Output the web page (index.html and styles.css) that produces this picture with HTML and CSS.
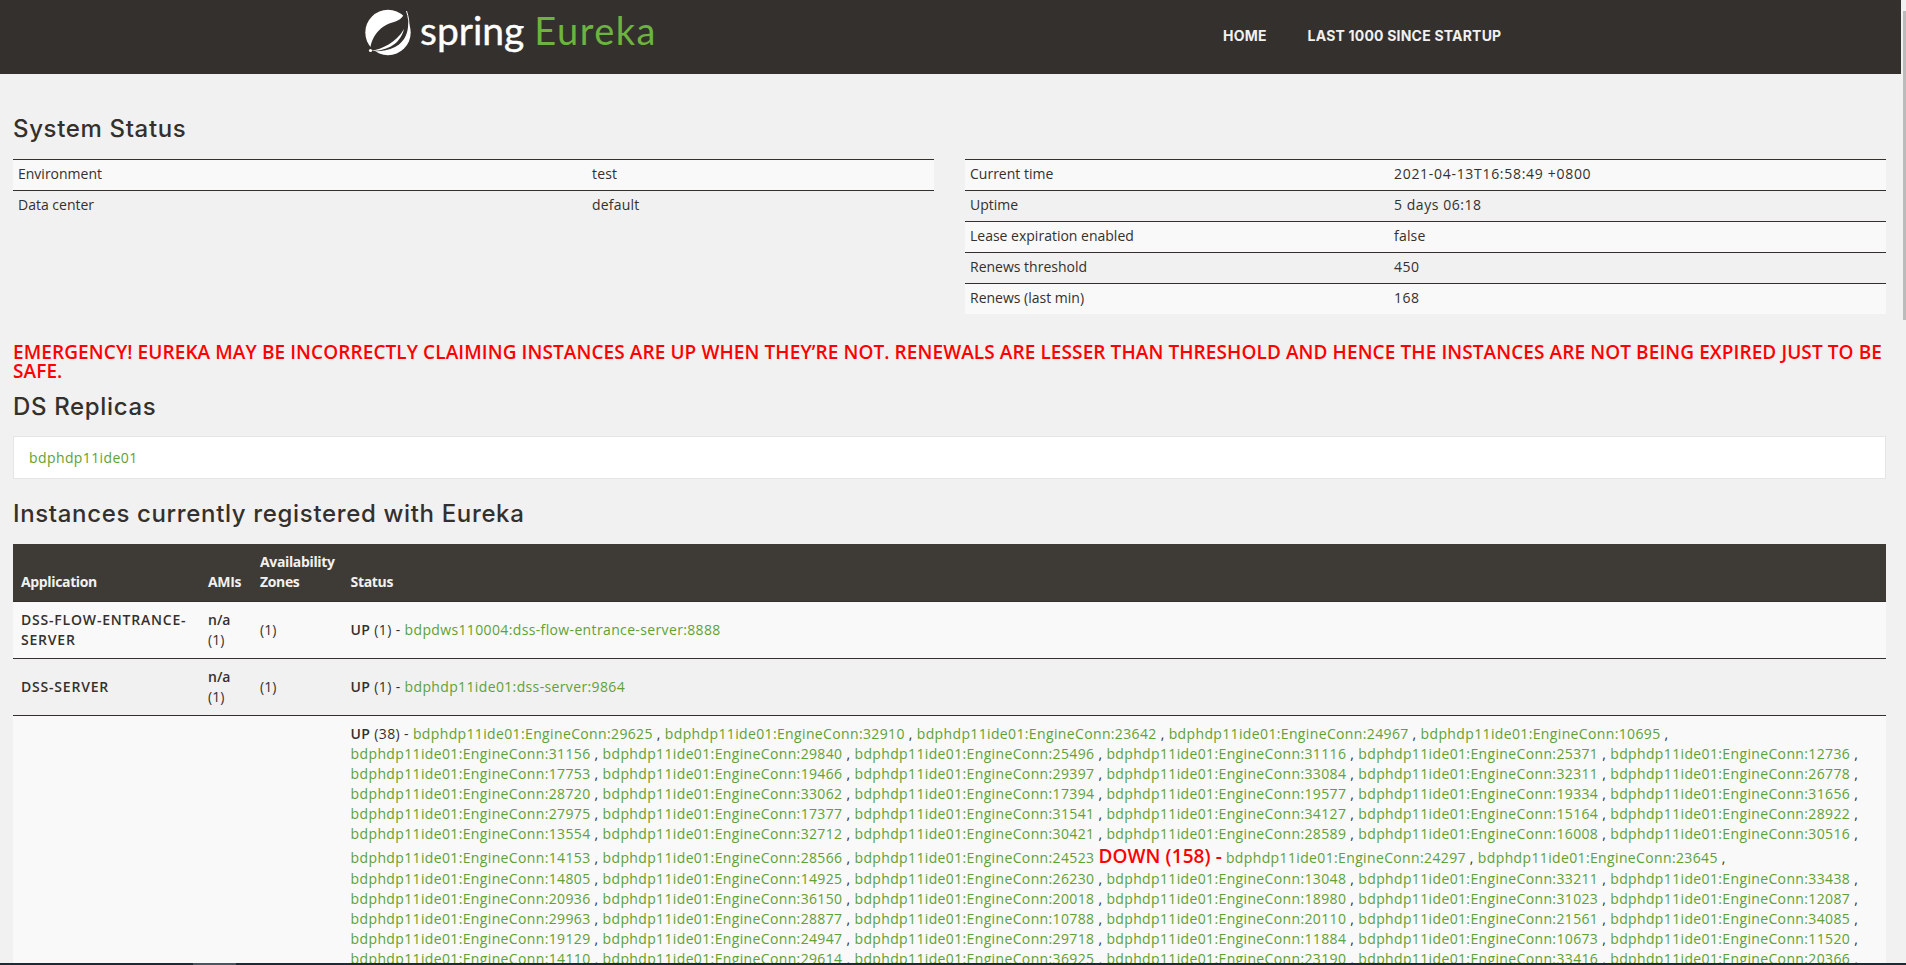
FILE: index.html
```html
<!DOCTYPE html>
<html lang="en">
<head>
  <meta charset="UTF-8">
  <meta name="viewport" content="width=device-width, initial-scale=1.0">
  <title>Eureka</title>
  <link rel="stylesheet" href="styles.css">
</head>
<body>
  <nav class="navbar">
    <a class="brand" href="#">
      <svg class="brand-icon" viewBox="0 0 60 55" width="60" height="55" aria-hidden="true">
        <circle cx="28" cy="27.5" r="22.7" fill="#fff"/>
        <path d="M46.5 5 C51 22 47 36 35 42 C27 46 18 47 10 46 C11 31 21 20 34 17 C40 15.500 44 11 46.500 5 Z" fill="#34302d"/>
        <path d="M11 46 C22 44 36 38 44 24 C40 41 24 46 11 46 Z" fill="#fff"/>
        <path d="M46.500 6 C50.500 18 50.500 32 41 41" fill="none" stroke="#fff" stroke-width="1"/>
        <circle cx="10.500" cy="45.500" r="1.600" fill="#fff"/>
      </svg>
      <span class="brand-spring">spring</span>
      <span class="brand-eureka">Eureka</span>
    </a>
    <ul class="nav-links">
      <li><a href="#">Home</a></li>
      <li><a href="#">Last 1000 since startup</a></li>
    </ul>
  </nav>

  <main class="container">
    <h2 class="first">System Status</h2>
    <div class="status-grid">
      <table class="table-striped table-env">
        <tr><td>Environment</td><td>test</td></tr>
        <tr><td>Data center</td><td>default</td></tr>
      </table>
      <table class="table-striped table-time">
        <tr><td>Current time</td><td class="date">2021-04-13T16:58:49 +0800</td></tr>
        <tr><td>Uptime</td><td class="num">5 days 06:18</td></tr>
        <tr><td>Lease expiration enabled</td><td>false</td></tr>
        <tr><td>Renews threshold</td><td class="num">450</td></tr>
        <tr><td>Renews (last min)</td><td class="num">168</td></tr>
      </table>
    </div>

    <h4 class="emergency">Emergency! Eureka may be incorrectly claiming instances are up when they’re not. Renewals are lesser than threshold and hence the instances are not being expired just to be safe.</h4>

    <h2 class="replicas-title">DS Replicas</h2>
    <div class="well"><a href="#">bdphdp11ide01</a></div>

    <h2 class="instances-title">Instances currently registered with Eureka</h2>
    <table class="table-striped instances">
      <thead>
        <tr>
          <th class="col-app">Application</th>
          <th class="col-ami">AMIs</th>
          <th class="col-zone">Availability Zones</th>
          <th>Status</th>
        </tr>
      </thead>
      <tbody>
        <tr>
          <td class="app-name">DSS-FLOW-ENTRANCE-SERVER</td>
          <td><b>n/a</b> (1)</td>
          <td>(1)</td>
          <td class="status"><b>UP</b> (1) - <a href="#">bdpdws110004:dss-flow-entrance-server:8888</a></td>
        </tr>
        <tr>
          <td class="app-name">DSS-SERVER</td>
          <td><b>n/a</b> (1)</td>
          <td>(1)</td>
          <td class="status"><b>UP</b> (1) - <a href="#">bdphdp11ide01:dss-server:9864</a></td>
        </tr>
        <tr>
          <td></td>
          <td></td>
          <td></td>
          <td class="status">
            <b>UP</b> (38) -
            <a href="#">bdphdp11ide01:EngineConn:29625</a> ,
            <a href="#">bdphdp11ide01:EngineConn:32910</a> ,
            <a href="#">bdphdp11ide01:EngineConn:23642</a> ,
            <a href="#">bdphdp11ide01:EngineConn:24967</a> ,
            <a href="#">bdphdp11ide01:EngineConn:10695</a> ,
            <a href="#">bdphdp11ide01:EngineConn:31156</a> ,
            <a href="#">bdphdp11ide01:EngineConn:29840</a> ,
            <a href="#">bdphdp11ide01:EngineConn:25496</a> ,
            <a href="#">bdphdp11ide01:EngineConn:31116</a> ,
            <a href="#">bdphdp11ide01:EngineConn:25371</a> ,
            <a href="#">bdphdp11ide01:EngineConn:12736</a> ,
            <a href="#">bdphdp11ide01:EngineConn:17753</a> ,
            <a href="#">bdphdp11ide01:EngineConn:19466</a> ,
            <a href="#">bdphdp11ide01:EngineConn:29397</a> ,
            <a href="#">bdphdp11ide01:EngineConn:33084</a> ,
            <a href="#">bdphdp11ide01:EngineConn:32311</a> ,
            <a href="#">bdphdp11ide01:EngineConn:26778</a> ,
            <a href="#">bdphdp11ide01:EngineConn:28720</a> ,
            <a href="#">bdphdp11ide01:EngineConn:33062</a> ,
            <a href="#">bdphdp11ide01:EngineConn:17394</a> ,
            <a href="#">bdphdp11ide01:EngineConn:19577</a> ,
            <a href="#">bdphdp11ide01:EngineConn:19334</a> ,
            <a href="#">bdphdp11ide01:EngineConn:31656</a> ,
            <a href="#">bdphdp11ide01:EngineConn:27975</a> ,
            <a href="#">bdphdp11ide01:EngineConn:17377</a> ,
            <a href="#">bdphdp11ide01:EngineConn:31541</a> ,
            <a href="#">bdphdp11ide01:EngineConn:34127</a> ,
            <a href="#">bdphdp11ide01:EngineConn:15164</a> ,
            <a href="#">bdphdp11ide01:EngineConn:28922</a> ,
            <a href="#">bdphdp11ide01:EngineConn:13554</a> ,
            <a href="#">bdphdp11ide01:EngineConn:32712</a> ,
            <a href="#">bdphdp11ide01:EngineConn:30421</a> ,
            <a href="#">bdphdp11ide01:EngineConn:28589</a> ,
            <a href="#">bdphdp11ide01:EngineConn:16008</a> ,
            <a href="#">bdphdp11ide01:EngineConn:30516</a> ,
            <a href="#">bdphdp11ide01:EngineConn:14153</a> ,
            <a href="#">bdphdp11ide01:EngineConn:28566</a> ,
            <a href="#">bdphdp11ide01:EngineConn:24523</a>
            <span class="down">DOWN (158) -</span>
            <a href="#">bdphdp11ide01:EngineConn:24297</a> ,
            <a href="#">bdphdp11ide01:EngineConn:23645</a> ,
            <a href="#">bdphdp11ide01:EngineConn:14805</a> ,
            <a href="#">bdphdp11ide01:EngineConn:14925</a> ,
            <a href="#">bdphdp11ide01:EngineConn:26230</a> ,
            <a href="#">bdphdp11ide01:EngineConn:13048</a> ,
            <a href="#">bdphdp11ide01:EngineConn:33211</a> ,
            <a href="#">bdphdp11ide01:EngineConn:33438</a> ,
            <a href="#">bdphdp11ide01:EngineConn:20936</a> ,
            <a href="#">bdphdp11ide01:EngineConn:36150</a> ,
            <a href="#">bdphdp11ide01:EngineConn:20018</a> ,
            <a href="#">bdphdp11ide01:EngineConn:18980</a> ,
            <a href="#">bdphdp11ide01:EngineConn:31023</a> ,
            <a href="#">bdphdp11ide01:EngineConn:12087</a> ,
            <a href="#">bdphdp11ide01:EngineConn:29963</a> ,
            <a href="#">bdphdp11ide01:EngineConn:28877</a> ,
            <a href="#">bdphdp11ide01:EngineConn:10788</a> ,
            <a href="#">bdphdp11ide01:EngineConn:20110</a> ,
            <a href="#">bdphdp11ide01:EngineConn:21561</a> ,
            <a href="#">bdphdp11ide01:EngineConn:34085</a> ,
            <a href="#">bdphdp11ide01:EngineConn:19129</a> ,
            <a href="#">bdphdp11ide01:EngineConn:24947</a> ,
            <a href="#">bdphdp11ide01:EngineConn:29718</a> ,
            <a href="#">bdphdp11ide01:EngineConn:11884</a> ,
            <a href="#">bdphdp11ide01:EngineConn:10673</a> ,
            <a href="#">bdphdp11ide01:EngineConn:11520</a> ,
            <a href="#">bdphdp11ide01:EngineConn:14110</a> ,
            <a href="#">bdphdp11ide01:EngineConn:29614</a> ,
            <a href="#">bdphdp11ide01:EngineConn:36925</a> ,
            <a href="#">bdphdp11ide01:EngineConn:23190</a> ,
            <a href="#">bdphdp11ide01:EngineConn:33416</a> ,
            <a href="#">bdphdp11ide01:EngineConn:20366</a> ,
          </td>
        </tr>
      </tbody>
    </table>
  </main>

  <div class="scroll-thumb"></div>
  <div class="taskbar"><span class="taskbar-item"></span></div>
</body>
</html>
```

FILE: styles.css
```css
html, body {
  height: 100%;
  overflow: hidden;
}
body {
  margin: 0;
  font-family: "Open Sans", Arial, sans-serif;
  font-size: 14px;
  line-height: 20px;
  color: #34302d;
  background-color: #f1f1f1;
}
a {
  color: #5fa134;
  text-decoration: none;
}
b {
  font-weight: 600;
}

/* top bar */
.navbar {
  display: flex;
  align-items: flex-start;
  height: 74px;
  margin-right: 5px;
  background-color: #34302d;
}
.brand {
  display: flex;
  align-items: baseline;
  margin-left: 360px;
  width: 863px;
}
.brand-icon {
  flex: none;
  align-self: flex-start;
  margin-top: 5px;
}
.brand-spring {
  font-family: Lato, sans-serif;
  font-size: 39px;
  line-height: 60px;
  color: #fff;
  -webkit-text-stroke: 0.4px #fff;
}
.brand-eureka {
  margin-left: 10px;
  font-family: Lato, sans-serif;
  font-size: 38px;
  line-height: 60px;
  letter-spacing: 1.5px;
  color: #6db33f;
}
.nav-links {
  display: flex;
  gap: 41px;
  margin: 0;
  padding: 26px 0 0;
  list-style: none;
}
.nav-links a {
  font-family: Inter, sans-serif;
  font-size: 14px;
  font-weight: 700;
  letter-spacing: 0.2px;
  text-transform: uppercase;
  color: #f1f1f1;
}

/* page */
.container {
  padding: 0 20px 0 13px;
}
h2 {
  margin: 0 0 16px;
  font-family: Inter, sans-serif;
  font-size: 24px;
  font-weight: 500;
  line-height: 30px;
  letter-spacing: 0.65px;
  color: #34302d;
}
h2.first {
  margin-top: 40px;
  margin-bottom: 15px;
}
h2.replicas-title {
  margin-bottom: 14px;
}
h2.instances-title {
  margin-bottom: 15px;
}
.status-grid {
  display: grid;
  grid-template-columns: 921px 921px;
  gap: 31px;
  align-items: start;
}
table {
  width: 100%;
  border-collapse: collapse;
  border-spacing: 0;
}
.table-striped td {
  padding: 4px 5px 6px;
  border-top: 1px solid #34302d;
  background-color: transparent;
}
.table-striped tr:nth-child(odd) td {
  background-color: #f9f9f9;
}
.table-env td:first-child {
  width: 564px;
}
.table-time td:first-child {
  width: 414px;
}
.table-env td:last-child,
.table-time td:last-child {
  letter-spacing: 0.2px;
}
.table-time td.num {
  letter-spacing: 0.55px;
}
.table-time td.date {
  letter-spacing: 0.7px;
}
.emergency {
  margin: 29px 0 11px;
  font-size: 19px;
  font-weight: 600;
  line-height: 19px;
  letter-spacing: 0.09px;
  text-transform: uppercase;
  color: #f00;
}
.well {
  margin-bottom: 20px;
  padding: 11px 15px 10px;
  background-color: #fff;
  border: 1px solid #e5e5e5;
  letter-spacing: 0.4px;
}

/* instances table */
.instances th {
  padding: 8px 8px 9px;
  text-align: left;
  vertical-align: bottom;
  font-weight: 700;
  letter-spacing: -0.35px;
  color: #f1f1f1;
  background-color: #3e3a35;
}
.instances .col-app { width: 171px; }
.instances .col-ami { width: 36px; }
.instances .col-zone { width: 68px; }
.instances td {
  padding: 8px;
  vertical-align: middle;
}
.instances .app-name {
  font-weight: 600;
  letter-spacing: 0.8px;
}
.instances .status {
  letter-spacing: 0.36px;
}
.down {
  font-size: 19px;
  font-weight: 600;
  line-height: 25px;
  letter-spacing: 0.1px;
  color: #f00;
}

/* bits of the window that overlap the page */
.scroll-thumb {
  position: fixed;
  top: 11px;
  right: 0;
  width: 3px;
  height: 309px;
  background-color: #bbb;
}
.taskbar {
  position: fixed;
  left: 0;
  right: 0;
  bottom: 0;
  height: 2px;
  background-color: #1e2a33;
}
.taskbar-item {
  display: block;
  width: 43px;
  height: 2px;
  margin-left: 193px;
  background-color: #4a5560;
}
```
